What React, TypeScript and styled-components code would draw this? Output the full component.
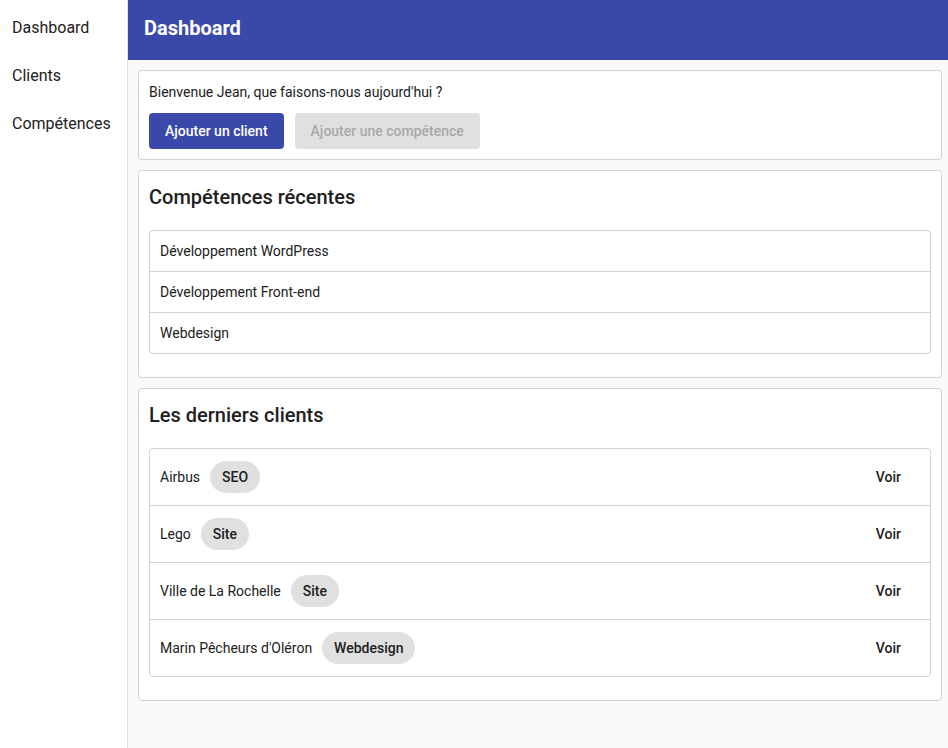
import React from "react";
import styled, { createGlobalStyle } from "styled-components";

const Global = createGlobalStyle`
  * { box-sizing: border-box; }
  html, body { margin: 0; padding: 0; height: 100%; }
  body {
    font-family: Roboto, "Liberation Sans", Arial, sans-serif;
    color: #212121;
    background: #f9f9f9;
  }
  #root { min-height: 100vh; }
`;

const Layout = styled.div`
  display: flex;
  min-height: 100vh;
`;

const Sidebar = styled.nav`
  width: 128px;
  flex-shrink: 0;
  background: #ffffff;
  border-right: 1px solid #e0e0e0;
  padding-top: 4px;
  display: flex;
  flex-direction: column;
`;

const NavItem = styled.a`
  display: block;
  padding: 12px 12px;
  font-size: 16px;
  line-height: 24px;
  color: #212121;
  text-decoration: none;
  white-space: nowrap;
`;

const Main = styled.div`
  flex: 1;
  display: flex;
  flex-direction: column;
  min-width: 0;
`;

const Header = styled.header`
  height: 60px;
  background: #3a49a9;
  color: #ffffff;
  display: flex;
  align-items: center;
  padding: 0 16px 4px;
  font-size: 20px;
  font-weight: 700;
`;

const Content = styled.main`
  padding: 10px 6px 10px 10px;
  display: flex;
  flex-direction: column;
  gap: 10px;
`;

const Card = styled.section`
  background: #ffffff;
  border: 1px solid #d2d2d2;
  border-radius: 4px;
  padding: 10px;
`;

const Welcome = styled.p`
  margin: 0;
  padding-top: 1px;
  font-size: 14px;
  line-height: 20px;
`;

const Actions = styled.div`
  display: flex;
  gap: 11px;
  margin-top: 11px;
`;

const Button = styled.button<{ $disabled?: boolean }>`
  height: 36px;
  padding: 0 16px;
  border: none;
  border-radius: 4px;
  font-family: inherit;
  font-size: 14px;
  font-weight: 500;
  background: ${(p) => (p.$disabled ? "#e0e0e0" : "#3a49a9")};
  color: ${(p) => (p.$disabled ? "#a8a8a8" : "#ffffff")};
  cursor: ${(p) => (p.$disabled ? "default" : "pointer")};
`;

const Title = styled.h2`
  margin: 0 0 17px;
  font-size: 20px;
  line-height: 32px;
  font-weight: 500;
`;

const List = styled.ul`
  list-style: none;
  margin: 0 0 13px;
  padding: 0;
  border: 1px solid #d2d2d2;
  border-radius: 4px;
`;

const Row = styled.li<{ $tall?: boolean }>`
  box-sizing: content-box;
  display: flex;
  align-items: center;
  height: ${(p) => (p.$tall ? "56px" : "40px")};
  padding: 0 10px;
  font-size: 14px;
  &:not(:first-child) {
    border-top: 1px solid #d2d2d2;
  }
`;

const Name = styled.span`
  margin-right: 10px;
`;

const Chip = styled.span`
  display: inline-flex;
  align-items: center;
  height: 32px;
  padding: 0 12px;
  border-radius: 16px;
  background: #e0e0e0;
  font-weight: 500;
  font-size: 14px;
`;

const Voir = styled.a`
  margin-left: auto;
  margin-right: 19px;
  font-weight: 500;
  font-size: 14px;
  color: #212121;
  cursor: pointer;
`;

const skills = ["Développement WordPress", "Développement Front-end", "Webdesign"];
const clients = [
  { name: "Airbus", tag: "SEO" },
  { name: "Lego", tag: "Site" },
  { name: "Ville de La Rochelle", tag: "Site" },
  { name: "Marin Pêcheurs d'Oléron", tag: "Webdesign" },
];

export default function App() {
  return (
    <>
      <Global />
      <Layout>
        <Sidebar>
          <NavItem>Dashboard</NavItem>
          <NavItem>Clients</NavItem>
          <NavItem>Compétences</NavItem>
        </Sidebar>
        <Main>
          <Header>Dashboard</Header>
          <Content>
            <Card>
              <Welcome>Bienvenue Jean, que faisons-nous aujourd'hui ?</Welcome>
              <Actions>
                <Button>Ajouter un client</Button>
                <Button $disabled>Ajouter une compétence</Button>
              </Actions>
            </Card>
            <Card>
              <Title>Compétences récentes</Title>
              <List>
                {skills.map((s) => (
                  <Row key={s}>{s}</Row>
                ))}
              </List>
            </Card>
            <Card>
              <Title>Les derniers clients</Title>
              <List>
                {clients.map((c) => (
                  <Row $tall key={c.name}>
                    <Name>{c.name}</Name>
                    <Chip>{c.tag}</Chip>
                    <Voir>Voir</Voir>
                  </Row>
                ))}
              </List>
            </Card>
          </Content>
        </Main>
      </Layout>
    </>
  );
}
